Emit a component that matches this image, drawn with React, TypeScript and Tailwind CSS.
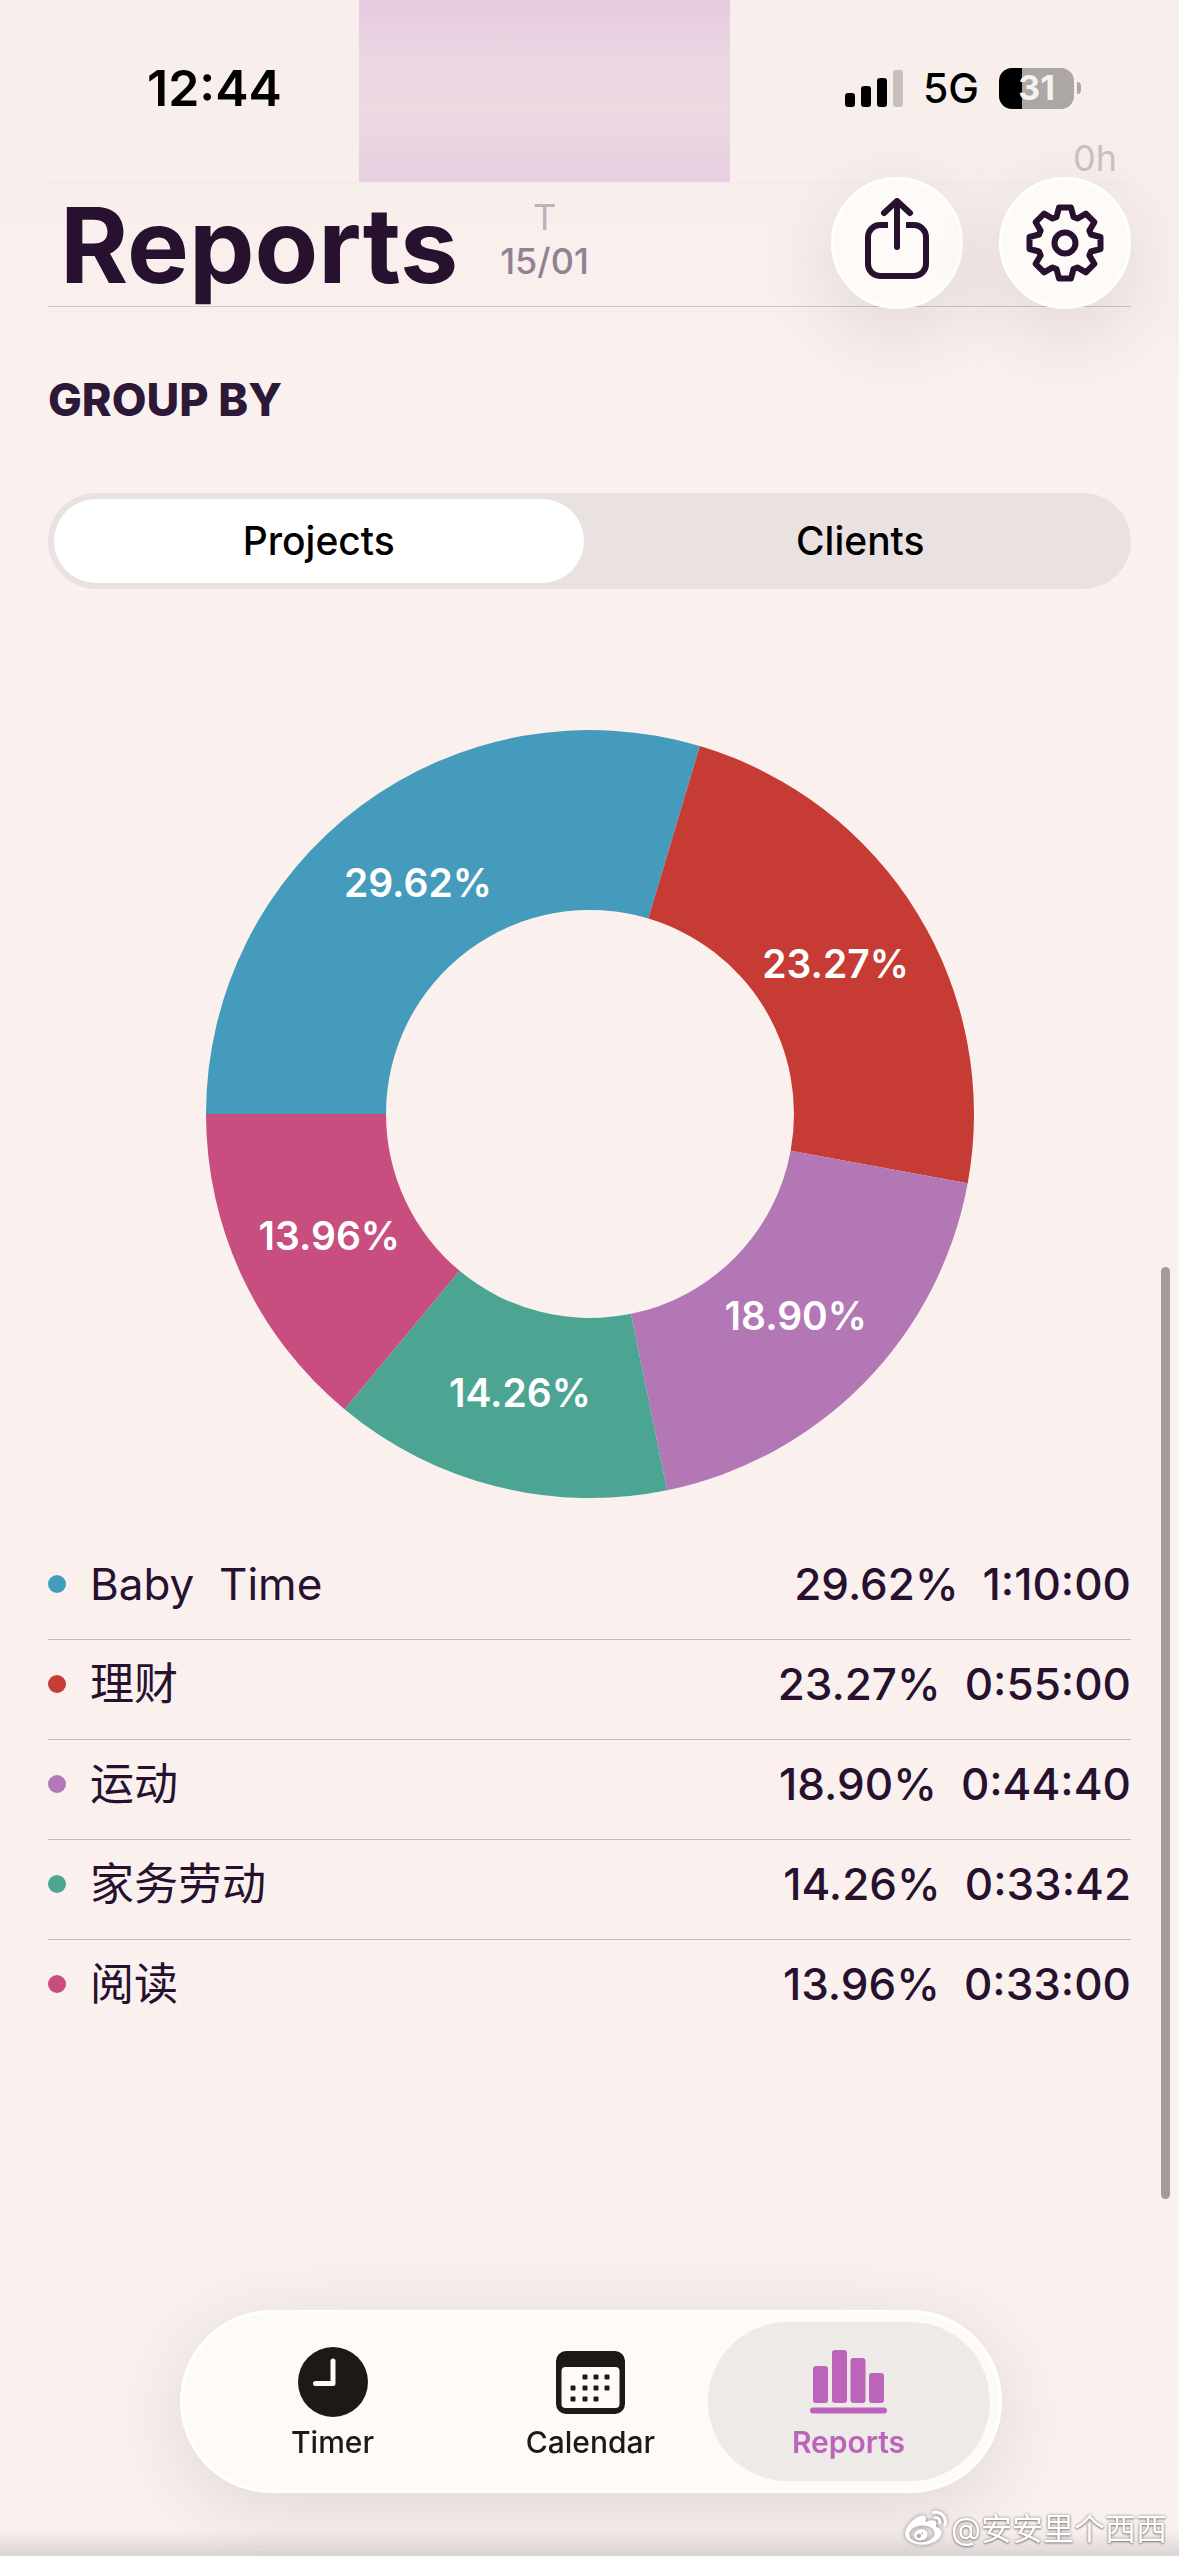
import { useState } from "react";
import { FaWeibo } from "react-icons/fa";

type Project = { name: string; share: number; time: string; color: string };

const projects: Project[] = [
  { name: "Baby  Time", share: 29.62, time: "1:10:00", color: "#459bbb" },
  { name: "理财", share: 23.27, time: "0:55:00", color: "#c63b34" },
  { name: "运动", share: 18.9, time: "0:44:40", color: "#b377b5" },
  { name: "家务劳动", share: 14.26, time: "0:33:42", color: "#4ba592" },
  { name: "阅读", share: 13.96, time: "0:33:00", color: "#c84e80" },
];

const OUTER = 384;
const INNER = 204;
const LABEL = 288;

/* Angle is measured clockwise from the nine o'clock position. */
function point(radius: number, fraction: number) {
  const a = fraction * Math.PI * 2;
  return { x: OUTER - radius * Math.cos(a), y: OUTER - radius * Math.sin(a) };
}

function DonutChart() {
  const total = projects.reduce((sum, p) => sum + p.share, 0);
  let cursor = 0;
  const slices = projects.map((p) => {
    const from = cursor / total;
    cursor += p.share;
    const to = cursor / total;
    const large = to - from > 0.5 ? 1 : 0;
    const a = point(OUTER, from);
    const b = point(OUTER, to);
    const c = point(INNER, to);
    const d = point(INNER, from);
    return {
      ...p,
      label: point(LABEL, (from + to) / 2),
      path: `M${a.x} ${a.y}A${OUTER} ${OUTER} 0 ${large} 1 ${b.x} ${b.y}L${c.x} ${c.y}A${INNER} ${INNER} 0 ${large} 0 ${d.x} ${d.y}Z`,
    };
  });
  return (
    <svg viewBox="0 0 768 768" className="w-full" role="img" aria-label="Share of time by project">
      {slices.map((s) => (
        <path key={s.name} d={s.path} fill={s.color} />
      ))}
      {slices.map((s) => (
        <text
          key={s.name}
          x={s.label.x}
          y={s.label.y + 14}
          textAnchor="middle"
          className="fill-white text-[39px] font-semibold"
        >
          {s.share.toFixed(2)}%
        </text>
      ))}
    </svg>
  );
}

function ShareIcon() {
  return (
    <svg
      width="66"
      height="82"
      viewBox="0 0 66 82"
      fill="none"
      stroke="currentColor"
      strokeWidth="6"
      className="-mt-2"
      aria-hidden="true"
    >
      <path d="M24 27H16A12 12 0 0 0 4 39V66A12 12 0 0 0 16 78H50A12 12 0 0 0 62 66V39A12 12 0 0 0 50 27H42" />
      <path d="M33 49V4M20 15L33 3L46 15" strokeLinecap="round" strokeLinejoin="round" />
    </svg>
  );
}

function GearIcon() {
  const tooth = [
    [-8.5, -26],
    [-6, -35.5],
    [6, -35.5],
    [8.5, -26],
  ];
  const points = Array.from({ length: 8 }, (_, i) => (i * Math.PI) / 4)
    .flatMap((a) =>
      tooth.map(
        ([x, y]) =>
          `${(x * Math.cos(a) - y * Math.sin(a)).toFixed(2)},${(x * Math.sin(a) + y * Math.cos(a)).toFixed(2)}`,
      ),
    )
    .join(" ");
  return (
    <svg
      width="80"
      height="80"
      viewBox="-40 -40 80 80"
      fill="none"
      stroke="currentColor"
      strokeWidth="6"
      strokeLinejoin="round"
      aria-hidden="true"
    >
      <polygon points={points} />
      <circle r="10.5" />
    </svg>
  );
}

function SignalIcon() {
  return (
    <svg width="58" height="38" viewBox="0 0 58 38" aria-hidden="true">
      <rect x="0" y="24" width="10" height="14" rx="3" />
      <rect x="16" y="17" width="10" height="21" rx="3" />
      <rect x="32" y="9" width="10" height="29" rx="3" />
      <rect x="48" y="1" width="10" height="37" rx="3" fill="#c6c0bd" />
    </svg>
  );
}

function Battery() {
  return (
    <div className="flex items-center gap-[3px]">
      <div className="flex h-[41px] w-[75px] items-center justify-center rounded-[13px] bg-[linear-gradient(90deg,#000_31%,#aca7a4_31%)] text-[34px] leading-none font-bold text-[#f6f2f0]">
        31
      </div>
      <div className="h-3 w-1 rounded-r-full bg-[#aca7a4]" />
    </div>
  );
}

function TimerIcon() {
  return (
    <svg width="70" height="70" viewBox="0 0 70 70" aria-hidden="true">
      <circle cx="35" cy="35" r="35" fill="currentColor" />
      <path
        d="M35 14V36.5H17.5"
        fill="none"
        stroke="#fefaf8"
        strokeWidth="5"
        strokeLinecap="round"
        strokeLinejoin="round"
      />
    </svg>
  );
}

function CalendarIcon() {
  const dots = [
    [29, 26], [40, 26], [51, 26],
    [17, 37], [29, 37], [40, 37], [51, 37],
    [17, 48], [29, 48], [40, 48],
  ];
  return (
    <svg width="69" height="63" viewBox="0 0 69 63" aria-hidden="true">
      <rect width="69" height="63" rx="10" fill="currentColor" />
      <rect x="5.5" y="16" width="58" height="41" rx="4" fill="#fefaf8" />
      {dots.map(([x, y]) => (
        <rect key={`${x}-${y}`} x={x - 2.5} y={y - 2.5} width="5" height="5" rx="1" fill="currentColor" />
      ))}
    </svg>
  );
}

function BarsIcon() {
  return (
    <svg width="77" height="64" viewBox="0 0 77 64" fill="currentColor" aria-hidden="true">
      <rect x="3" y="16" width="15" height="37" rx="3" />
      <rect x="22" y="0" width="15" height="53" rx="3" />
      <rect x="40.5" y="8" width="15" height="45" rx="3" />
      <rect x="59" y="23" width="15" height="30" rx="3" />
      <rect x="0" y="57.5" width="77" height="6" rx="3" />
    </svg>
  );
}

const tabs = [
  { label: "Timer", Icon: TimerIcon },
  { label: "Calendar", Icon: CalendarIcon },
  { label: "Reports", Icon: BarsIcon },
];

const roundButton =
  "flex size-[132px] items-center justify-center rounded-full border-3 border-white bg-[#fefaf8] shadow-[0_24px_80px_rgba(40,25,30,0.12)]";

export default function App() {
  const [group, setGroup] = useState("Projects");

  return (
    <div className="relative min-h-screen bg-[#faf1ef] font-['Inter','Noto_Sans_CJK_SC',sans-serif] text-[#27112f]">
      <main className="bg-[linear-gradient(#f8efec,#f8efec_180px,#faf1ef_400px)] px-12 pb-[300px]">
        {/* Tail of the bar chart that is scrolled under the header */}
        <section aria-label="Daily total" className="text-4xl leading-[44px] text-[#cbc0c6]">
          <div className="flex h-[185px] border-b-3 border-[#f3edea]">
            <div className="flex flex-1 justify-center">
              <div className="w-[371px] bg-[linear-gradient(#e5cae0,#ead5e1_30%,#edd9e2_60%,#e9d3e0_85%,#e7cee1)]" />
            </div>
            <div className="flex w-[90px] items-end justify-center pb-[2px] pl-[18px]">0h</div>
          </div>
          <div className="flex h-[122px] border-b border-[#cdc6c6]">
            <div className="flex flex-1 flex-col items-center pt-[10px]">
              <span className="text-[#bfb1b9]">T</span>
              <span className="font-medium text-[#918293]">15/01</span>
            </div>
            <div className="w-[90px]" />
          </div>
        </section>

        <h2 className="mt-[65px] text-[45px] leading-[56px] font-extrabold text-[#2c1937]">GROUP BY</h2>

        <div className="mt-[65px] flex h-24 gap-3 rounded-full bg-[#eae2e0] p-[6px]" role="group" aria-label="Group by">
          {["Projects", "Clients"].map((name) => (
            <button
              key={name}
              type="button"
              aria-pressed={group === name}
              onClick={() => setGroup(name)}
              className="flex-1 rounded-full text-[39px] font-medium text-black aria-pressed:bg-white"
            >
              {name}
            </button>
          ))}
        </div>

        <div className="mx-auto mt-[141px] w-[71%] max-w-[768px]">
          <DonutChart />
        </div>

        <ul className="mt-[42px] divide-y divide-[#c4bcbb] text-[44px] leading-[60px]">
          {projects.map((p) => (
            <li key={p.name} className="flex items-center pt-[14px] pb-[25px]">
              <span className="size-[18px] rounded-full" style={{ backgroundColor: p.color }} />
              <span className="ml-6 flex-1 whitespace-pre">{p.name}</span>
              <span className="font-medium">{p.share.toFixed(2)}%</span>
              <span className="ml-6 font-medium">{p.time}</span>
            </li>
          ))}
        </ul>
      </main>

      <header className="absolute inset-x-0 top-0">
        <div className="flex h-[177px] items-start justify-between pt-[58px] pr-[98px] pl-[147px] text-black">
          <span className="text-[50px] leading-[60px] font-semibold">12:44</span>
          <div className="flex h-[60px] items-center gap-5">
            <SignalIcon />
            <span className="text-[41px] leading-[60px] font-medium">5G</span>
            <Battery />
          </div>
        </div>
        <div className="flex items-center justify-between pr-12 pl-[60px]">
          <h1 className="pt-1 text-[104px] leading-[128px] font-bold">Reports</h1>
          <div className="flex gap-9">
            <button type="button" aria-label="Share" className={roundButton}>
              <ShareIcon />
            </button>
            <button type="button" aria-label="Settings" className={roundButton}>
              <GearIcon />
            </button>
          </div>
        </div>
      </header>

      {/* Scroll indicator */}
      <div className="fixed top-[1267px] right-[9px] h-[932px] w-[9px] rounded-full bg-[#a19c9b]" />

      <footer className="fixed inset-x-0 bottom-0 flex justify-center bg-[linear-gradient(to_top,#dcd4d4,transparent_26px)] pb-[63px] pl-[2px]">
        <nav
          aria-label="Main"
          className="flex h-[183px] rounded-full border-3 border-white bg-[#fefaf8] p-[9px] shadow-[0_16px_80px_rgba(40,25,30,0.12)]"
        >
          {tabs.map(({ label, Icon }) => (
            <a
              key={label}
              href={`#${label.toLowerCase()}`}
              aria-current={label === "Reports" ? "page" : undefined}
              className="-ml-6 flex w-[282px] flex-col items-center rounded-full pt-6 text-[30px] leading-9 font-medium text-[#1e1916] first:ml-0 aria-[current=page]:bg-[#eeeae7] aria-[current=page]:font-semibold aria-[current=page]:text-[#bb64b9]"
            >
              <span className="flex h-[72px] items-center">
                <Icon />
              </span>
              <span className="mt-[6px]">{label}</span>
            </a>
          ))}
        </nav>
        <div className="absolute right-3 bottom-[6px] flex items-center gap-1 text-[31px] leading-10 text-white [text-shadow:0_0_3px_#8a8282,0_1px_2px_#8a8282]">
          <FaWeibo className="size-[42px] drop-shadow-[0_0_2px_#8a8282]" aria-hidden="true" />
          <span>@安安里个西西</span>
        </div>
      </footer>
    </div>
  );
}
